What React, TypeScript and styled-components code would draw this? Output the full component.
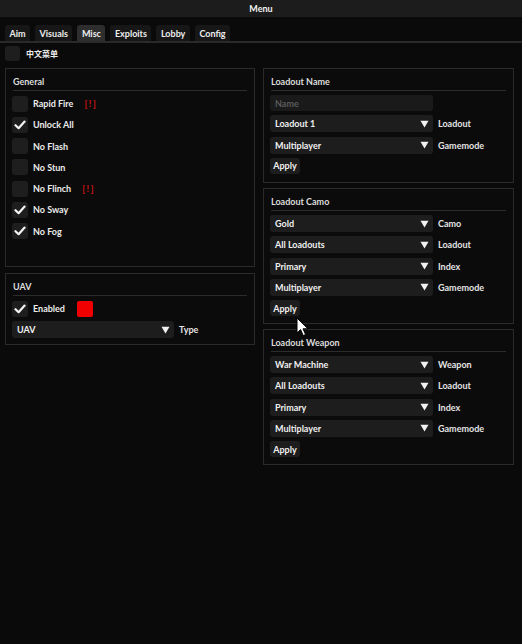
import React from 'react';
import styled, { createGlobalStyle } from 'styled-components';

const GlobalStyle = createGlobalStyle`
  html, body {
    margin: 0;
    padding: 0;
    background: #090909;
  }
  * {
    box-sizing: border-box;
  }
`;

const Window = styled.div`
  position: relative;
  width: 522px;
  height: 644px;
  background: #0a0a0a;
  color: #ececec;
  font-family: 'Lato', 'Noto Sans CJK SC', sans-serif;
  font-weight: 700;
  font-size: 9px;
  overflow: hidden;
`;

const TitleBar = styled.div`
  height: 17px;
  background: #1c1c1c;
  display: flex;
  align-items: center;
  justify-content: center;
  font-size: 9px;
  color: #f2f2f2;
`;

const TabBar = styled.div`
  display: flex;
  gap: 5px;
  margin-top: 8px;
  padding: 0 5px;
  border-bottom: 2px solid #2a2a2a;
`;

const Tab = styled.div<{ active?: boolean }>`
  height: 16px;
  padding: 0 4.5px;
  display: flex;
  align-items: center;
  border-radius: 3px 3px 0 0;
  background: ${p => (p.active ? '#2e2e2e' : '#171717')};
  color: #ededed;
`;

const LangRow = styled.div`
  display: flex;
  align-items: center;
  gap: 6px;
  padding: 2px 5px 0;
  height: 19px;
  font-size: 8px;
`;

const Box = styled.div<{ size?: number }>`
  width: ${p => p.size ?? 16}px;
  height: ${p => p.size ?? 16}px;
  border-radius: 3px;
  background: #1e1e1e;
  display: flex;
  align-items: center;
  justify-content: center;
  flex-shrink: 0;
`;

const Columns = styled.div`
  display: grid;
  grid-template-columns: 250px 251px;
  gap: 8px;
  padding: 6px 0 0 5px;
  align-items: start;
`;

const Column = styled.div<{ gap: number }>`
  display: flex;
  flex-direction: column;
  gap: ${p => p.gap}px;
`;

const Panel = styled.div<{ height: number }>`
  height: ${p => p.height}px;
  border: 1px solid #2b2b2b;
  background: #0b0b0b;
  padding: 5px 6px 0;
`;

const PanelTitle = styled.div`
  height: 14px;
  display: flex;
  align-items: center;
  color: #dcdcdc;
  padding-left: 1px;
`;

const Separator = styled.div`
  height: 1px;
  margin: 2px 1px 4px;
  background: #2c2c2c;
`;

const Rows = styled.div<{ gap: number }>`
  display: flex;
  flex-direction: column;
  gap: ${p => p.gap}px;
`;

const CheckRow = styled.div`
  height: 17px;
  display: flex;
  align-items: center;
  gap: 5px;
`;

const Warn = styled.span`
  color: #d41414;
  margin-left: 6px;
  letter-spacing: -0.3px;
`;

const ColorSwatch = styled.div`
  width: 16px;
  height: 16px;
  border-radius: 2px;
  background: #f00000;
  margin-left: 7px;
`;

const FieldRow = styled.div`
  height: 17px;
  display: flex;
  align-items: center;
  gap: 5px;
`;

const Select = styled.div<{ width: number }>`
  width: ${p => p.width}px;
  height: 17px;
  border-radius: 3px;
  background: #1d1d1d;
  display: flex;
  align-items: center;
  justify-content: space-between;
  padding: 0 4px 0 5px;
  color: #f0f0f0;
`;

const Input = styled.div`
  width: 163px;
  height: 16px;
  border-radius: 3px;
  background: #1a1a1a;
  display: flex;
  align-items: center;
  padding-left: 5px;
  color: #5a5a5a;
`;

const FieldLabel = styled.span`
  color: #e4e4e4;
`;

const Button = styled.div`
  width: 30px;
  height: 16px;
  border-radius: 3px;
  background: #1d1d1d;
  display: flex;
  align-items: center;
  justify-content: center;
  color: #f0f0f0;
`;

const Cursor = styled.svg`
  position: absolute;
  left: 296px;
  top: 317px;
`;

const Check = () => (
  <svg width="12" height="10" viewBox="0 0 12 10">
    <path d="M1.5 5.2 L4.6 8.2 L10.6 1.6" fill="none" stroke="#f4f4f4" strokeWidth="2.2" strokeLinecap="round" strokeLinejoin="round" />
  </svg>
);

const Arrow = () => (
  <svg width="9" height="8" viewBox="0 0 9 8">
    <path d="M0.5 0.8 L8.5 0.8 L4.5 7.5 Z" fill="#f2f2f2" />
  </svg>
);

interface Toggle {
  label: string;
  checked: boolean;
  warn?: boolean;
}

const generalToggles: Toggle[] = [
  { label: 'Rapid Fire', checked: false, warn: true },
  { label: 'Unlock All', checked: true },
  { label: 'No Flash', checked: false },
  { label: 'No Stun', checked: false },
  { label: 'No Flinch', checked: false, warn: true },
  { label: 'No Sway', checked: true },
  { label: 'No Fog', checked: true },
];

const camoFields = [
  { value: 'Gold', label: 'Camo' },
  { value: 'All Loadouts', label: 'Loadout' },
  { value: 'Primary', label: 'Index' },
  { value: 'Multiplayer', label: 'Gamemode' },
];

const weaponFields = [
  { value: 'War Machine', label: 'Weapon' },
  { value: 'All Loadouts', label: 'Loadout' },
  { value: 'Primary', label: 'Index' },
  { value: 'Multiplayer', label: 'Gamemode' },
];

const tabs = ['Aim', 'Visuals', 'Misc', 'Exploits', 'Lobby', 'Config'];

const Dropdown: React.FC<{ value: string; label: string; width?: number }> = ({ value, label, width = 163 }) => (
  <FieldRow>
    <Select width={width}>
      <span>{value}</span>
      <Arrow />
    </Select>
    <FieldLabel>{label}</FieldLabel>
  </FieldRow>
);

const App: React.FC = () => {
  return (
    <Window>
      <GlobalStyle />
      <TitleBar>Menu</TitleBar>

      <TabBar>
        {tabs.map(t => (
          <Tab key={t} active={t === 'Misc'}>{t}</Tab>
        ))}
      </TabBar>

      <LangRow>
        <Box size={15} />
        <span>中文菜单</span>
      </LangRow>

      <Columns>
        {/* left column */}
        <Column gap={6}>
          <Panel height={199}>
            <PanelTitle>General</PanelTitle>
            <Separator />
            <Rows gap={4.3}>
              {generalToggles.map(t => (
                <CheckRow key={t.label}>
                  <Box>{t.checked && <Check />}</Box>
                  <span>{t.label}</span>
                  {t.warn && <Warn>[ ! ]</Warn>}
                </CheckRow>
              ))}
            </Rows>
          </Panel>

          <Panel height={72}>
            <PanelTitle>UAV</PanelTitle>
            <Separator />
            <Rows gap={4}>
              <CheckRow>
                <Box><Check /></Box>
                <span>Enabled</span>
                <ColorSwatch />
              </CheckRow>
              <Dropdown value="UAV" label="Type" width={162} />
            </Rows>
          </Panel>
        </Column>

        {/* right column */}
        <Column gap={5}>
          <Panel height={115}>
            <PanelTitle>Loadout Name</PanelTitle>
            <Separator />
            <Rows gap={4.3}>
              <Input>Name</Input>
              <Dropdown value="Loadout 1" label="Loadout" />
              <Dropdown value="Multiplayer" label="Gamemode" />
              <Button>Apply</Button>
            </Rows>
          </Panel>

          <Panel height={136}>
            <PanelTitle>Loadout Camo</PanelTitle>
            <Separator />
            <Rows gap={4.3}>
              {camoFields.map(f => (
                <Dropdown key={f.label} value={f.value} label={f.label} />
              ))}
              <Button>Apply</Button>
            </Rows>
          </Panel>

          <Panel height={136}>
            <PanelTitle>Loadout Weapon</PanelTitle>
            <Separator />
            <Rows gap={4.3}>
              {weaponFields.map(f => (
                <Dropdown key={f.label} value={f.value} label={f.label} />
              ))}
              <Button>Apply</Button>
            </Rows>
          </Panel>
        </Column>
      </Columns>

      <Cursor width="13" height="20" viewBox="0 0 13 20">
        <path d="M1 1 L1 16 L4.6 12.6 L7.2 18.6 L9.6 17.6 L7 11.8 L12 11.8 Z" fill="#ffffff" stroke="#000000" strokeWidth="1" strokeLinejoin="round" />
      </Cursor>
    </Window>
  );
};

export default App;
